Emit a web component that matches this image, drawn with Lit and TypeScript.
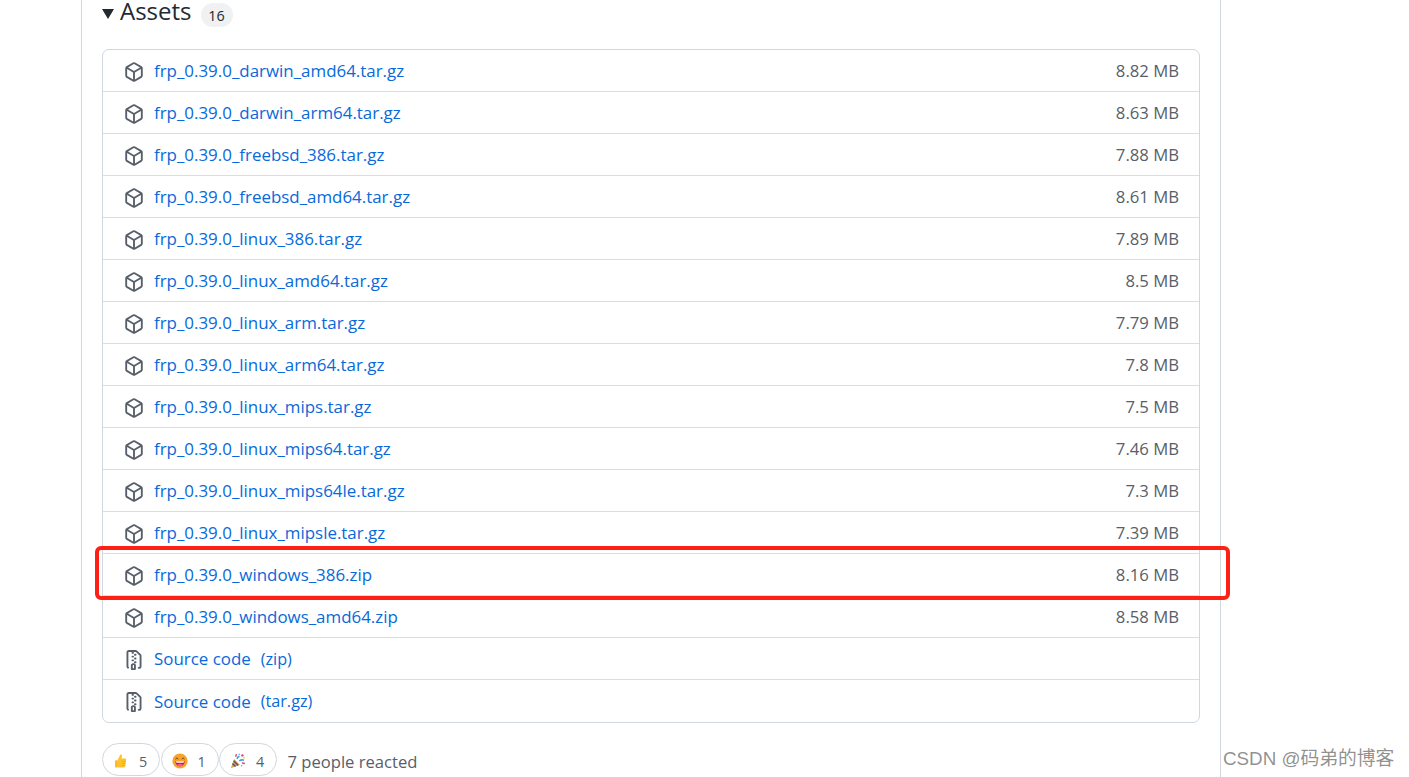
import { LitElement, html, css, svg } from "lit";
import { customElement } from "lit/decorators.js";

const assets: [string, string][] = [
  ["frp_0.39.0_darwin_amd64.tar.gz", "8.82 MB"],
  ["frp_0.39.0_darwin_arm64.tar.gz", "8.63 MB"],
  ["frp_0.39.0_freebsd_386.tar.gz", "7.88 MB"],
  ["frp_0.39.0_freebsd_amd64.tar.gz", "8.61 MB"],
  ["frp_0.39.0_linux_386.tar.gz", "7.89 MB"],
  ["frp_0.39.0_linux_amd64.tar.gz", "8.5 MB"],
  ["frp_0.39.0_linux_arm.tar.gz", "7.79 MB"],
  ["frp_0.39.0_linux_arm64.tar.gz", "7.8 MB"],
  ["frp_0.39.0_linux_mips.tar.gz", "7.5 MB"],
  ["frp_0.39.0_linux_mips64.tar.gz", "7.46 MB"],
  ["frp_0.39.0_linux_mips64le.tar.gz", "7.3 MB"],
  ["frp_0.39.0_linux_mipsle.tar.gz", "7.39 MB"],
  ["frp_0.39.0_windows_386.zip", "8.16 MB"],
  ["frp_0.39.0_windows_amd64.zip", "8.58 MB"],
];

const packageIcon = html`<svg class="ico" viewBox="0 0 16 16"><path fill="currentColor" d="m8.878.392 5.25 3.045c.54.314.872.89.872 1.514v6.098a1.75 1.75 0 0 1-.872 1.514l-5.25 3.045a1.75 1.75 0 0 1-1.756 0l-5.25-3.045A1.75 1.75 0 0 1 1 11.049V4.951c0-.624.332-1.201.872-1.514L7.122.392a1.75 1.75 0 0 1 1.756 0ZM7.875 1.69l-4.63 2.685L8 7.133l4.755-2.758-4.63-2.685a.248.248 0 0 0-.25 0ZM2.5 5.677v5.372c0 .09.047.171.125.216l4.625 2.683V8.432Zm6.25 8.271 4.625-2.683a.25.25 0 0 0 .125-.216V5.677L8.75 8.432Z"/></svg>`;

const zipIcon = html`<svg class="ico" viewBox="0 0 16 16"><path fill="currentColor" d="M3.5 1.75v11.5c0 .09.048.173.126.217a.75.75 0 0 1-.752 1.298A1.748 1.748 0 0 1 2 13.25V1.75C2 .784 2.784 0 3.75 0h5.586c.464 0 .909.185 1.237.513l2.914 2.914c.329.328.513.773.513 1.237v8.586A1.75 1.75 0 0 1 12.25 15h-.5a.75.75 0 0 1 0-1.5h.5a.25.25 0 0 0 .25-.25V4.664a.25.25 0 0 0-.073-.177L9.513 1.573a.25.25 0 0 0-.177-.073H7.25a.75.75 0 0 1 0 1.5h-.5a.75.75 0 0 1 0-1.5h-3a.25.25 0 0 0-.25.25Zm3.75 8.75h.5c.966 0 1.75.784 1.75 1.75v3a.75.75 0 0 1-.75.75h-2.5a.75.75 0 0 1-.75-.75v-3c0-.966.784-1.75 1.75-1.75ZM6 5.25a.75.75 0 0 1 .75-.75h.5a.75.75 0 0 1 0 1.5h-.5A.75.75 0 0 1 6 5.25Zm.75 2.25h.5a.75.75 0 0 1 0 1.5h-.5a.75.75 0 0 1 0-1.5ZM8 6.75A.75.75 0 0 1 8.75 6h.5a.75.75 0 0 1 0 1.5h-.5A.75.75 0 0 1 8 6.75ZM8.75 3h.5a.75.75 0 0 1 0 1.5h-.5a.75.75 0 0 1 0-1.5ZM8 9.75A.75.75 0 0 1 8.75 9h.5a.75.75 0 0 1 0 1.5h-.5A.75.75 0 0 1 8 9.75Zm-1 2.5v2.25h1v-2.25a.25.25 0 0 0-.25-.25h-.5a.25.25 0 0 0-.25.25Z"/></svg>`;

const thumb = html`<svg class="emo" viewBox="0 0 20 20">${svg`
  <path fill="#fdc32d" d="M5.6 9.4 9 2.2c.3-.7 1.9-.6 2.2.8.2 1-.2 2.6-.6 4h4.3c1.2 0 1.7 1 1.5 2l-1.2 7.6c-.2 1-.9 1.6-2 1.600H8c-1 0-1.600-.3-2.400-.7Z"/>
  <rect x="2.600" y="9.200" width="3.400" height="9" rx="1" fill="#fdb52a"/>
  <path stroke="#e9a418" stroke-width=".8" fill="none" d="M11 10.600h5M11 13.200h4.600M11 15.800h4"/>`}</svg>`;

const smile = html`<svg class="emo" viewBox="0 0 20 20">${svg`
  <circle cx="10" cy="10" r="9.500" fill="#f7a32b"/>
  <path d="M4.200 10.200h11.600c0 3.800-2.600 6.400-5.800 6.400s-5.800-2.600-5.800-6.400Z" fill="#c2185b"/>
  <path d="M5 10.200h10c-.1 1-.3 1.400-.7 1.900H5.700c-.4-.5-.6-.9-.7-1.900Z" fill="#fff"/>
  <path d="M6.500 14.700c1-.9 2.200-1.200 3.500-1.200s2.500.3 3.500 1.200c-1 1.200-2.200 1.900-3.500 1.900s-2.500-.7-3.500-1.900Z" fill="#f06292"/>
  <path d="M4.600 7.400c.5-1.500 2.300-1.500 2.900 0M12.500 7.400c.5-1.500 2.300-1.500 2.900 0" stroke="#5d3a1a" stroke-width="1.100" fill="none" stroke-linecap="round"/>`}</svg>`;

const tada = html`<svg class="emo" viewBox="0 0 20 20">${svg`
  <path d="M1 19 5.200 7.600 12.400 14.800Z" fill="#e0a92e"/>
  <path d="M3 13.200 6.900 17M4.400 9.700l5.900 5.800" stroke="#5b4a9e" stroke-width="1.800"/>
  <path d="M9 7.500c.2-2 1.300-3.200 3-3.500M11.500 10c1.700-1.400 3.700-1.800 6-1" stroke="#3aa8e0" stroke-width="2" fill="none"/>
  <path d="M7.200 4.700 8 1.500M15 12.600l3.600.5" stroke="#e0407b" stroke-width="1.800"/>
  <circle cx="15.500" cy="3" r="1.500" fill="#e0407b"/>
  <circle cx="11.500" cy="1.600" r="1" fill="#4bb3e6"/>
  <circle cx="17.500" cy="6" r="1" fill="#f3b62e"/>
  <circle cx="14.500" cy="16" r="1" fill="#4bb3e6"/>`}</svg>`;

@customElement("app-root")
export class AppRoot extends LitElement {
  static styles = css`
    :host {
      display: block;
      position: relative;
      height: 777px;
      overflow: hidden;
      background: #fff;
      font-family: "Open Sans", "Noto Sans", sans-serif;
      color: #24292f;
    }
    .sheet {
      box-sizing: border-box;
      margin-left: 81px;
      width: 1140px;
      height: 777px;
      padding: 0 20px;
      border-left: 1px solid #d0d7de;
      border-right: 1px solid #d0d7de;
      overflow: hidden;
    }
    .head {
      display: flex;
      align-items: center;
      height: 25px;
      margin-bottom: 24px;
    }
    .caret {
      width: 0;
      height: 0;
      border-left: 6px solid transparent;
      border-right: 6px solid transparent;
      border-top: 10px solid #24292f;
      margin-right: 6px;
      margin-top: 3px;
    }
    .title {
      align-self: flex-start;
      font-size: 24px;
      line-height: 21px;
      padding-top: 0;
      font-weight: 500;
    }
    .count {
      margin-left: 9px;
      width: 32px;
      height: 24px;
      margin-top: 5px;
      border-radius: 12px;
      background: #eff1f3;
      font-size: 14.4px;
      display: flex;
      align-items: center;
      justify-content: center;
    }
    .box {
      border: 1px solid #d0d7de;
      border-radius: 7px;
    }
    .row {
      box-sizing: border-box;
      height: 42px;
      display: flex;
      align-items: center;
      padding: 0 20px 0 21px;
      border-top: 1px solid #d8dee4;
    }
    .row:first-child {
      height: 41px;
      border-top: 0;
    }
    .row:last-child {
      height: 43px;
    }
    .ico {
      width: 20px;
      height: 20px;
      color: #57606a;
      margin-right: 10px;
      flex: none;
      transform: translateY(1px);
    }
    .name {
      color: #0969da;
      font-weight: 500;
      font-size: 16.92px;
    }
    .src {
      color: #0969da;
      font-weight: 500;
      font-size: 16.9px;
    }
    .ext {
      color: #0969da;
      margin-left: 10px;
      font-size: 16.2px;
    }
    .size {
      margin-left: auto;
      color: #57606a;
      font-size: 16.7px;
    }
    .reacts {
      display: flex;
      align-items: center;
      gap: 0.5px;
      margin-top: 20px;
      height: 33px;
    }
    .chip {
      box-sizing: border-box;
      height: 33px;
      width: 58px;
      border: 1px solid #d0d7de;
      border-radius: 17px;
      display: flex;
      align-items: center;
      padding: 3px 0 0 10px;
      font-size: 14.4px;
      color: #57606a;
    }
    .emo {
      width: 16px;
      height: 16px;
      margin-right: 10px;
      flex: none;
    }
    .people {
      margin-left: 10px;
      margin-top: 3px;
      color: #57606a;
      font-size: 16.6px;
    }
    .mark {
      position: absolute;
      left: 95px;
      top: 546px;
      box-sizing: border-box;
      width: 1135px;
      height: 54px;
      border: 4px solid #ff2015;
      border-radius: 6px;
    }
    .wm {
      position: absolute;
      left: 1223px;
      top: 745px;
      font-family: "Liberation Sans", "Noto Sans CJK SC", sans-serif;
      font-size: 18.8px;
      line-height: 28px;
      white-space: nowrap;
      color: rgba(95, 95, 95, 0.7);
      text-shadow: 0 0 1px rgba(255, 255, 255, 0.9);
    }
  `;

  render() {
    return html`
      <div class="sheet">
        <div class="head">
          <span class="caret"></span>
          <span class="title">Assets</span>
          <span class="count">16</span>
        </div>
        <div class="box">
          ${assets.map(
            ([n, s]) => html`<div class="row">
              ${packageIcon}<span class="name">${n}</span><span class="size">${s}</span>
            </div>`
          )}
          <div class="row">${zipIcon}<span class="src">Source code</span><span class="ext">(zip)</span></div>
          <div class="row">${zipIcon}<span class="src">Source code</span><span class="ext">(tar.gz)</span></div>
        </div>
        <div class="reacts">
          <span class="chip">${thumb}5</span>
          <span class="chip">${smile}1</span>
          <span class="chip">${tada}4</span>
          <span class="people">7 people reacted</span>
        </div>
      </div>
      <div class="mark"></div>
      <div class="wm">CSDN @码弟的博客</div>
    `;
  }
}
